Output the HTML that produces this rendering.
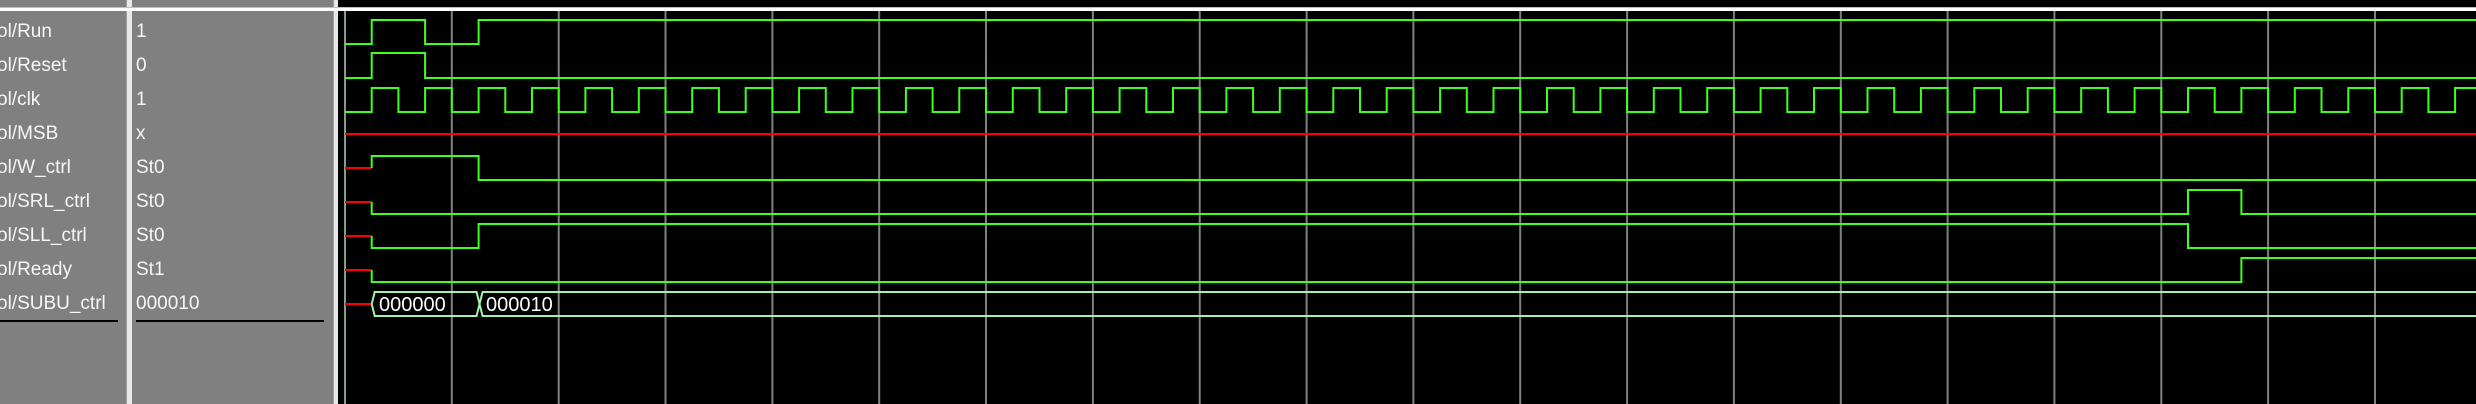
<!DOCTYPE html>
<html><head><meta charset="utf-8"><style>
html,body{margin:0;padding:0;width:2476px;height:404px;overflow:hidden;background:#000}
.p{position:absolute;top:0;height:404px;background:#808080}
.t{position:absolute;font-family:"Liberation Sans",sans-serif;font-size:19px;color:#f6f6f6;line-height:20px;white-space:nowrap}
</style></head><body>
<div class="p" style="left:0;width:126px"></div>
<div class="p" style="left:126px;width:6px;background:#e8e8e8;border-left:1px solid #a0a0a0;box-sizing:border-box"></div>
<div class="p" style="left:132px;width:201px"></div>
<div class="p" style="left:333px;width:5px;background:#e8e8e8;border-left:1px solid #a0a0a0;box-sizing:border-box"></div>
<div style="position:absolute;left:0;top:7px;width:2476px;height:1px;background:#c0c0c0"></div>
<div style="position:absolute;left:0;top:8px;width:2476px;height:3px;background:#fff"></div>
<div style="position:absolute;left:0;top:320px;width:118px;height:2px;background:#000"></div>
<div style="position:absolute;left:136px;top:320px;width:188px;height:2px;background:#000"></div>

<div class="t" style="left:-3px;top:22px">ol/Run</div>
<div class="t" style="left:-3px;top:56px">ol/Reset</div>
<div class="t" style="left:-3px;top:90px">ol/clk</div>
<div class="t" style="left:-3px;top:124px">ol/MSB</div>
<div class="t" style="left:-3px;top:158px">ol/W_ctrl</div>
<div class="t" style="left:-3px;top:192px">ol/SRL_ctrl</div>
<div class="t" style="left:-3px;top:226px">ol/SLL_ctrl</div>
<div class="t" style="left:-3px;top:260px">ol/Ready</div>
<div class="t" style="left:-3px;top:294px">ol/SUBU_ctrl</div>

<div class="t" style="left:136px;top:22px">1</div>
<div class="t" style="left:136px;top:56px">0</div>
<div class="t" style="left:136px;top:90px">1</div>
<div class="t" style="left:136px;top:124px">x</div>
<div class="t" style="left:136px;top:158px">St0</div>
<div class="t" style="left:136px;top:192px">St0</div>
<div class="t" style="left:136px;top:226px">St0</div>
<div class="t" style="left:136px;top:260px">St1</div>
<div class="t" style="left:136px;top:294px">000010</div>

<svg id="w" style="position:absolute;left:0;top:0" width="2476" height="404" xmlns="http://www.w3.org/2000/svg">
<g id="grid"></g>
<g id="sig" fill="none" stroke-width="2"></g>
<text x="379" y="311" font-family="Liberation Sans, sans-serif" font-size="20" fill="#ffffff">000000</text>
<text x="486" y="311" font-family="Liberation Sans, sans-serif" font-size="20" fill="#ffffff">000010</text>
</svg>
<script>
var T=26.71,t0=345,X=function(n){return t0+n*T;},E=2476;
var g='';
g+='<line x1="345" y1="11" x2="345" y2="404" stroke="#80a080" stroke-width="2"/>';
for(var k=1;k<20;k++){var x=(t0+k*4*T).toFixed(1);g+='<line x1="'+x+'" y1="11" x2="'+x+'" y2="404" stroke="#808080" stroke-width="2"/>';}
document.getElementById('grid').innerHTML=g;
function wave(hi,lo,init,edges){ // edges: list of n where toggles
  var v=init,d='M'+t0+' '+(v?hi:lo);
  for(var i=0;i<edges.length;i++){var x=X(edges[i]).toFixed(1);d+=' H'+x;v=!v;d+=' V'+(v?hi:lo);}
  d+=' H'+E;return '<path d="'+d+'" stroke="#40ff20"/>';
}
var s='';
s+=wave(20,44,0,[1,3,5]);
s+=wave(53,78,0,[1,3]);
var ce=[];for(var n=1;n<82;n++)ce.push(n);
s+=wave(88,112,0,ce);
s+='<path d="M345 134 H2476" stroke="#ff0000"/>';
function xs(y,hi,lo,init,edges){
  var v=init,d='M'+X(1).toFixed(1)+' '+y+' V'+(v?hi:lo);
  for(var i=0;i<edges.length;i++){var x=X(edges[i]).toFixed(1);d+=' H'+x;v=!v;d+=' V'+(v?hi:lo);}
  d+=' H'+E;
  return '<path d="M345 '+y+' H'+X(1).toFixed(1)+'" stroke="#ff0000"/><path d="'+d+'" stroke="#40ff20"/>';
}
s+=xs(168,156,180,1,[5]);
s+=xs(202,190,214,0,[69,71]);
s+=xs(236,224,248,0,[5,69]);
s+=xs(270,258,282,0,[71]);
s+='<path d="M345 304 H'+X(1).toFixed(1)+'" stroke="#ff0000"/>';
var a=X(1),b=X(5);
s+='<path d="M'+a+' 304 L'+(a+3)+' 292 H'+(b-2)+' L'+(b+1)+' 304 L'+(b+4)+' 292 H'+E+' M'+a+' 304 L'+(a+3)+' 316 H'+(b-2)+' L'+(b+1)+' 304 L'+(b+4)+' 316 H'+E+'" stroke="#a8f0a8"/>';
document.getElementById('sig').innerHTML=s;
</script>
</body></html>
